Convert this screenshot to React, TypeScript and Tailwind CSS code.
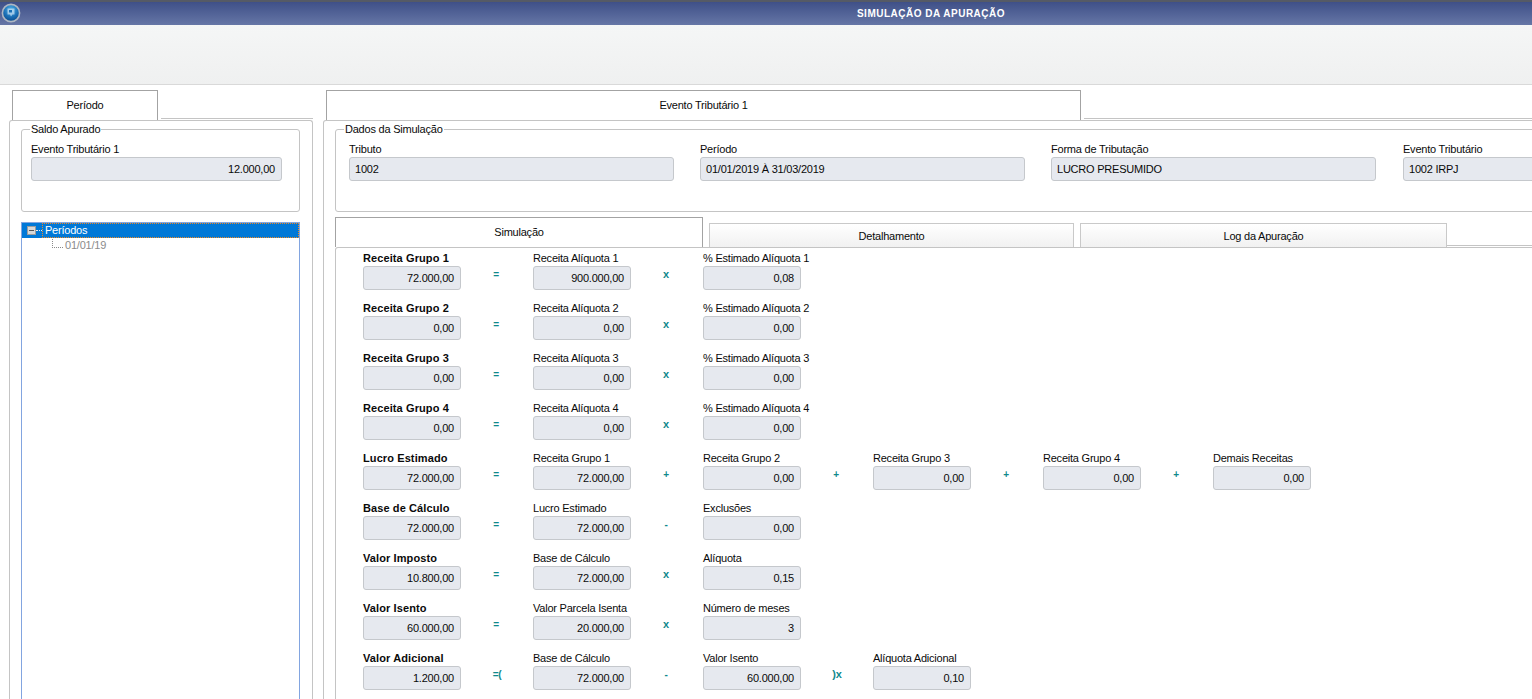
const rows = [
  { name: "Receita Grupo 1", value: "72.000,00", eq: "=", cols: [["Receita Alíquota 1", "900.000,00", "x"], ["% Estimado Alíquota 1", "0,08", ""]] },
  { name: "Receita Grupo 2", value: "0,00", eq: "=", cols: [["Receita Alíquota 2", "0,00", "x"], ["% Estimado Alíquota 2", "0,00", ""]] },
  { name: "Receita Grupo 3", value: "0,00", eq: "=", cols: [["Receita Alíquota 3", "0,00", "x"], ["% Estimado Alíquota 3", "0,00", ""]] },
  { name: "Receita Grupo 4", value: "0,00", eq: "=", cols: [["Receita Alíquota 4", "0,00", "x"], ["% Estimado Alíquota 4", "0,00", ""]] },
  {
    name: "Lucro Estimado",
    value: "72.000,00",
    eq: "=",
    cols: [
      ["Receita Grupo 1", "72.000,00", "+"],
      ["Receita Grupo 2", "0,00", "+"],
      ["Receita Grupo 3", "0,00", "+"],
      ["Receita Grupo 4", "0,00", "+"],
      ["Demais Receitas", "0,00", ""],
    ],
  },
  { name: "Base de Cálculo", value: "72.000,00", eq: "=", cols: [["Lucro Estimado", "72.000,00", "-"], ["Exclusões", "0,00", ""]] },
  { name: "Valor Imposto", value: "10.800,00", eq: "=", cols: [["Base de Cálculo", "72.000,00", "x"], ["Alíquota", "0,15", ""]] },
  { name: "Valor Isento", value: "60.000,00", eq: "=", cols: [["Valor Parcela Isenta", "20.000,00", "x"], ["Número de meses", "3", ""]] },
  {
    name: "Valor Adicional",
    value: "1.200,00",
    eq: "=(",
    cols: [
      ["Base de Cálculo", "72.000,00", "-"],
      ["Valor Isento", "60.000,00", ")x"],
      ["Alíquota Adicional", "0,10", ""],
    ],
  },
];

const dados = [
  ["Tributo", "1002"],
  ["Período", "01/01/2019 À 31/03/2019"],
  ["Forma de Tributação", "LUCRO PRESUMIDO"],
  ["Evento Tributário", "1002 IRPJ"],
];

function Box({ value, left }: { value: string; left?: boolean }) {
  return (
    <div
      className={`h-[24px] flex items-center pl-[5px] pr-[6px] bg-[#e6e9ef] border border-[#c5c8cc] rounded-[3px] text-[#0a0a0a] ${
        left ? "justify-start" : "justify-end"
      }`}
    >
      {value}
    </div>
  );
}

function Cell({ label, value, bold }: { label: string; value: string; bold?: boolean }) {
  return (
    <div className="w-[98px] shrink-0">
      <div className={`h-[15px] leading-[14px] whitespace-nowrap text-[#0a0a0a] ${bold ? "font-bold tracking-[0.1px]" : ""}`}>
        {label}
      </div>
      <Box value={value} />
    </div>
  );
}

function Op({ text }: { text: string }) {
  return (
    <div
      className={`w-[72px] shrink-0 self-end h-[24px] pb-[8px] flex items-center justify-center font-bold text-[#10898c] ${
        text.length === 1 ? "pr-[2px]" : ""
      } ${text.includes("x") ? "text-[11px]" : "text-[10px]"}`}
    >
      {text}
    </div>
  );
}

function Logo() {
  return (
    <svg width="20" height="20" viewBox="0 0 20 20">
      <defs>
        <radialGradient id="globe" cx="50%" cy="30%" r="70%">
          <stop offset="0%" stopColor="#4fb0e6" />
          <stop offset="60%" stopColor="#1a6fb5" />
          <stop offset="100%" stopColor="#0b4a8c" />
        </radialGradient>
      </defs>
      <circle cx="10" cy="10" r="8.600" fill="url(#globe)" stroke="#aeb6c2" strokeWidth="1.600" />
      <path d="M6.500 5.500h7v6h-2l-1.500 2-1-2h-2.500z" fill="#cfe4f5" opacity="0.7" />
      <path d="M8 7h3v2.500H8z" fill="#1a6fb5" />
    </svg>
  );
}

export default function App() {
  return (
    <div className="h-screen w-[1532px] overflow-hidden flex flex-col bg-white text-[11px] tracking-[-0.22px] font-['Liberation_Sans',Arial,sans-serif]">
      <div className="h-[25px] shrink-0 relative flex items-center justify-center border-t-2 border-[#555a66] bg-gradient-to-b from-[#3f5088] to-[#6676a6]">
        <div className="absolute left-[1px] top-[1px]">
          <Logo />
        </div>
        <span className="ml-[330px] font-bold text-[10px] tracking-[0.5px] text-white">SIMULAÇÃO DA APURAÇÃO</span>
      </div>
      <div className="h-[60px] shrink-0 bg-gradient-to-b from-[#f5f6f6] to-[#eff0f0] border-b border-[#d9d9d9]" />

      <div className="flex-1 min-h-0 flex pt-[5px] pl-[9px]">
        {/* coluna esquerda */}
        <div className="w-[304px] shrink-0 flex flex-col">
          <div className="flex h-[30px] pl-[3px] shrink-0">
            <div className="w-[146px] border border-b-0 border-[#a3a3a3] flex items-center justify-center text-[#0a0a0a]">
              Período
            </div>
            <div className="flex-1 ml-[3px] mb-[1px] border-b border-[#c4c4c4]" />
          </div>
          <div className="flex-1 min-h-0 border border-b-0 border-[#c4c4c4] rounded-t-[3px] pl-[11px] pr-[12px] flex flex-col">
            <fieldset className="h-[89px] shrink-0 mt-[2px] border border-[#c4c4c4] rounded-[3px] px-[9px]">
              <legend className="ml-[-1px] px-[1px] leading-[12px] text-[#0a0a0a]">Saldo Apurado</legend>
              <div className="mt-[7px] mr-[8px]">
                <div className="h-[15px] leading-[14px] text-[#0a0a0a]">Evento Tributário 1</div>
                <Box value="12.000,00" />
              </div>
            </fieldset>
            <div className="flex-1 mt-[10px] border border-b-0 border-[#82a5e0] text-[#0a0a0a]">
              <div className="h-[15px] bg-[#0078d7] flex items-center">
                <div className="ml-[5px] w-[9px] h-[9px] bg-[#d8d8d8] border border-[#9c9c9c] flex items-center justify-center">
                  <div className="w-[5px] h-[1px] bg-[#555]" />
                </div>
                <div className="w-[6px] border-t border-dotted border-[#e8e8e8]" />
                <div className="flex-1 h-[15px] pl-[2px] border border-dotted border-[#f08a24] leading-[13px] text-white">
                  Períodos
                </div>
              </div>
              <div className="h-[15px] flex items-center pl-[30px]">
                <div className="w-[11px] h-[9px] mb-[4px] border-l border-b border-dotted border-[#8a8a8a]" />
                <span className="ml-[2px] text-[#8b8b8b]">01/01/19</span>
              </div>
            </div>
          </div>
        </div>

        {/* coluna direita */}
        <div className="ml-[10px] w-[1300px] shrink-0 flex flex-col">
          <div className="flex h-[30px] pl-[3px] shrink-0">
            <div className="w-[755px] border border-b-0 border-[#a3a3a3] flex items-center justify-center text-[#0a0a0a]">
              Evento Tributário 1
            </div>
            <div className="flex-1 ml-[3px] mb-[1px] border-b border-[#c4c4c4]" />
          </div>
          <div className="flex-1 min-h-0 border border-b-0 border-[#c4c4c4] rounded-t-[3px] pl-[11px] flex flex-col">
            <fieldset className="h-[89px] shrink-0 mt-[2px] border border-[#c4c4c4] rounded-[3px] pl-[13px]">
              <legend className="ml-[-5px] px-[1px] leading-[12px] text-[#0a0a0a]">Dados da Simulação</legend>
              <div className="mt-[7px] flex gap-[26px]">
                {dados.map(([label, value]) => (
                  <div key={label} className="w-[325px] shrink-0 last:ml-[1px]">
                    <div className="h-[15px] leading-[14px] text-[#0a0a0a]">{label}</div>
                    <Box value={value} left />
                  </div>
                ))}
              </div>
            </fieldset>

            <div className="flex h-[30px] mt-[5px] shrink-0 items-end">
              <div className="w-[368px] h-[30px] border border-b-0 border-[#a3a3a3] flex items-center justify-center text-[#0a0a0a]">
                Simulação
              </div>
              <div className="w-[365px] h-[24px] ml-[6px] pt-[2px] border border-b-0 border-[#c9c9c9] bg-gradient-to-b from-white to-[#f1f1f1] flex items-center justify-center text-[#0a0a0a]">
                Detalhamento
              </div>
              <div className="w-[367px] h-[24px] ml-[6px] pt-[2px] border border-b-0 border-[#c9c9c9] bg-gradient-to-b from-white to-[#f1f1f1] flex items-center justify-center text-[#0a0a0a]">
                Log da Apuração
              </div>
              <div className="flex-1 mb-[1px] border-b border-[#c4c4c4]" />
            </div>

            <div className="flex-1 min-h-0 border border-b-0 border-[#c4c4c4] rounded-t-[3px] pl-[27px] pt-[3px] flex flex-col gap-[11px]">
              {rows.map((row) => (
                <div key={row.name} className="flex">
                  <Cell label={row.name} value={row.value} bold />
                  <Op text={row.eq} />
                  {row.cols.map(([label, value, op]) => (
                    <div key={label} className="flex">
                      <Cell label={label} value={value} />
                      {op && <Op text={op} />}
                    </div>
                  ))}
                </div>
              ))}
            </div>
          </div>
        </div>
      </div>
    </div>
  );
}
